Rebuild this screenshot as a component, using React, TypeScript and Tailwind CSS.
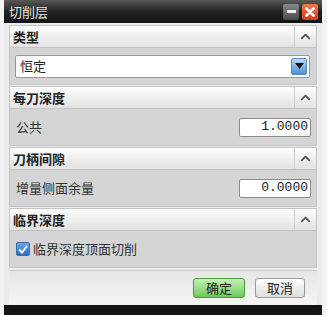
import { ChevronUp } from "lucide-react";

const font = { fontFamily: '"Noto Sans CJK SC", "Liberation Sans", sans-serif' };

const SectionHeader = ({ title }: { title: string }) => (
  <div className="flex h-[23px] border border-[#c4c4c4] bg-gradient-to-b from-[#fdfdfd] to-[#e2e2e2]">
    <div className="flex flex-1 items-center pl-[3px] text-[13px] font-bold text-[#222]">{title}</div>
    <div className="flex w-[22px] items-center justify-center border-l border-[#d0d0d0]">
      <ChevronUp size={15} strokeWidth={3} className="text-[#555]" />
    </div>
  </div>
);

const NumberRow = ({ label, value }: { label: string; value: string }) => (
  <div className="flex h-[37px] items-center justify-between border-x border-b border-[#c4c4c4] bg-[#d5d5d5] pl-[6px] pr-[5px]">
    <span className="text-[13px] text-[#333]">{label}</span>
    <div
      className="flex h-[19px] w-[72px] items-center justify-end rounded-[2px] border border-[#8a8a8a] bg-white pr-[2px] text-[13px] text-[#222]"
      style={{ fontFamily: '"Liberation Mono", monospace' }}
    >
      {value}
    </div>
  </div>
);

export default function App() {
  return (
    <div className="h-[315px] w-[327px] bg-[#f3f3f3] pl-[4px] pr-[5px]" style={font}>
      <div className="flex h-full flex-col bg-[#ececec]">
        <div className="flex h-[23px] items-center justify-between bg-gradient-to-b from-[#5a5a5a] via-[#222] to-[#141414] pl-[5px] pr-[4px]">
          <span className="text-[13px] text-[#e6e6e6]">切削层</span>
          <div className="flex gap-[3px]">
            <div className="flex h-[16px] w-[16px] items-center justify-center rounded-[2px] bg-gradient-to-b from-[#8a8a8a] to-[#4a4a4a]">
              <div className="h-[3px] w-[9px] bg-[#eee]" />
            </div>
            <div className="flex h-[16px] w-[16px] items-center justify-center rounded-[2px] bg-gradient-to-b from-[#f07a4a] to-[#d43a1a]">
              <svg width="10" height="10" viewBox="0 0 10 10">
                <path d="M1.5 1.5 L8.5 8.5 M8.5 1.5 L1.5 8.5" stroke="#fff" strokeWidth="2.6" strokeLinecap="round" />
              </svg>
            </div>
          </div>
        </div>

        <div className="flex flex-1 flex-col gap-[1px] px-[5px] pt-[2px]">
          <div>
            <SectionHeader title="类型" />
            <div className="flex h-[37px] items-center border-x border-b border-[#c4c4c4] bg-[#d5d5d5] pl-[5px] pr-[6px]">
              <div className="flex h-[23px] flex-1 items-center justify-between rounded-[2px] border border-[#7a9cc4] bg-white pl-[4px] pr-[2px]">
                <span className="text-[13px] text-[#222]">恒定</span>
                <div className="flex h-[17px] w-[16px] items-center justify-center rounded-[2px] border border-[#5a86c0] bg-gradient-to-b from-[#bcd8f6] to-[#4f8fd8]">
                  <svg width="9" height="6" viewBox="0 0 9 6">
                    <path d="M0 0 H9 L4.5 6 Z" fill="#111" />
                  </svg>
                </div>
              </div>
            </div>
          </div>

          <div>
            <SectionHeader title="每刀深度" />
            <NumberRow label="公共" value="1.0000" />
          </div>

          <div>
            <SectionHeader title="刀柄间隙" />
            <NumberRow label="增量侧面余量" value="0.0000" />
          </div>

          <div>
            <SectionHeader title="临界深度" />
            <div className="flex h-[37px] items-center gap-[3px] border-x border-b border-[#c4c4c4] bg-[#d5d5d5] pl-[6px]">
              <div className="flex h-[14px] w-[14px] items-center justify-center rounded-[2px] border border-[#3a6ea8] bg-gradient-to-b from-[#6aa6e8] to-[#2c6cc0]">
                <svg width="10" height="9" viewBox="0 0 10 9">
                  <path d="M1 4.5 L4 7.5 L9 1" fill="none" stroke="#fff" strokeWidth="2" />
                </svg>
              </div>
              <span className="text-[13px] text-[#333]">临界深度顶面切削</span>
            </div>
          </div>

          <div className="mt-[1px] flex flex-1 items-center justify-end gap-[10px] border-t border-[#c8c8c8] bg-gradient-to-b from-[#e6e6e6] to-[#f4f4f4] pr-[12px]">
            <button className="flex h-[20px] w-[52px] items-center justify-center rounded-[3px] border border-[#4a9a3a] bg-gradient-to-b from-[#c8f0b8] to-[#6cc85a] text-[13px] text-[#222]">
              确定
            </button>
            <button className="flex h-[20px] w-[50px] items-center justify-center rounded-[3px] border border-[#9a9a9a] bg-gradient-to-b from-[#ffffff] to-[#dedede] text-[13px] text-[#222]">
              取消
            </button>
          </div>
        </div>

        <div className="h-[10px] bg-[#151515]" />
      </div>
    </div>
  );
}
